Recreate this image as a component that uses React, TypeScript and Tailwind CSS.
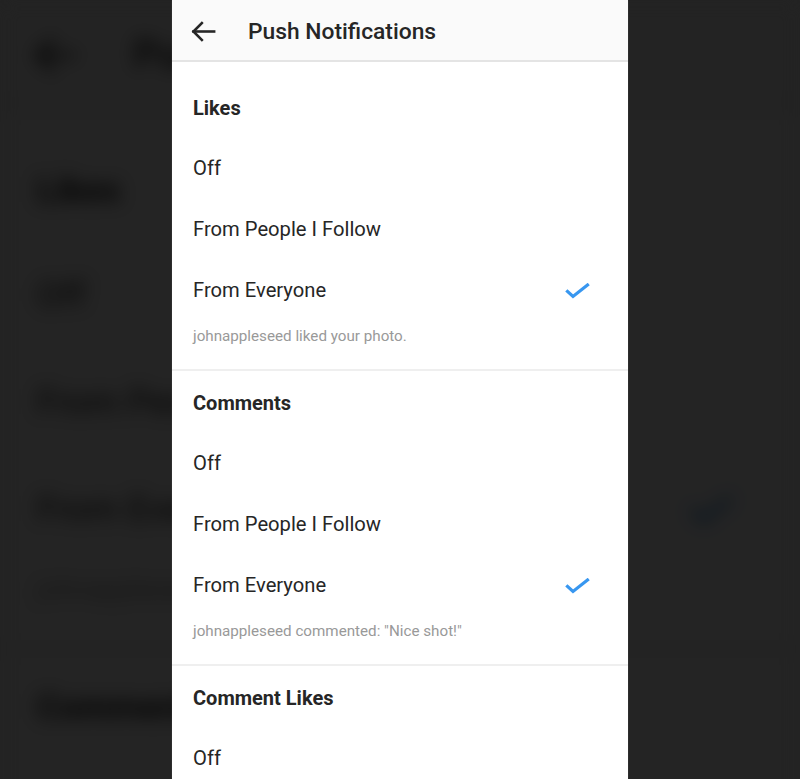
const options = ["Off", "From People I Follow", "From Everyone"];

const sections = [
  { title: "Likes", selected: 2, note: "johnappleseed liked your photo." },
  { title: "Comments", selected: 2, note: 'johnappleseed commented: "Nice shot!"' },
  { title: "Comment Likes", selected: 0, note: "" },
];

const BackArrow = () => (
  <svg width="31" height="31" viewBox="0 0 24 24" fill="none" stroke="#262626" strokeWidth="2" strokeLinecap="square">
    <path d="M21 12H5" />
    <path d="M11.5 5.5L5 12l6.5 6.5" />
  </svg>
);

const Check = () => (
  <svg width="25" height="16" viewBox="0 0 25 16" fill="none" stroke="#3897f0" strokeWidth="3.2" strokeLinecap="square">
    <path d="M2.5 8.5l5.5 5L22.5 2" />
  </svg>
);

const Screen = () => (
  <div className="w-[456px] h-[779px] bg-white overflow-hidden font-['Roboto',sans-serif] text-[#262626]">
    {/* Header */}
    <div className="h-[62px] bg-[#fafafa] border-b-2 border-[#e4e4e4] flex items-center pt-[2px]">
      <div className="pl-[15px] w-[76px] flex items-center">
        <BackArrow />
      </div>
      <h1 className="text-[22.8px] font-medium pt-[2px]">Push Notifications</h1>
    </div>

    <div className="pt-[14px]">
      {sections.map((s, i) => (
        <div key={s.title} className={i < sections.length - 1 ? "border-b-2 border-[#efefef]" : ""}>
          <div className="h-[61px] flex items-center px-[21px] pt-[2px] text-[20px] font-bold">{s.title}</div>
          {options.map((o, j) => (
            <div key={o} className="h-[61px] flex items-center justify-between pl-[21px] pr-[38px] pt-[2px] text-[20.2px]">
              <span>{o}</span>
              {s.note && j === s.selected ? <Check /> : null}
            </div>
          ))}
          {s.note ? (
            <div className="pl-[21px] pt-[6px] pb-[23px] text-[15.2px] leading-[20px] text-[#999999]">{s.note}</div>
          ) : null}
        </div>
      ))}
    </div>
  </div>
);

export default function App() {
  return (
    <div className="relative w-full h-[779px] overflow-hidden bg-[#232323] flex justify-center">
      {/* blurred, dimmed copy behind */}
      <div className="absolute inset-0 overflow-hidden pointer-events-none">
        <div className="origin-top-left scale-[1.754] blur-[5px] brightness-[0.14]">
          <Screen />
        </div>
      </div>
      <div className="relative shadow-[0_0_2px_rgba(255,255,255,0.15)]">
        <Screen />
      </div>
    </div>
  );
}
